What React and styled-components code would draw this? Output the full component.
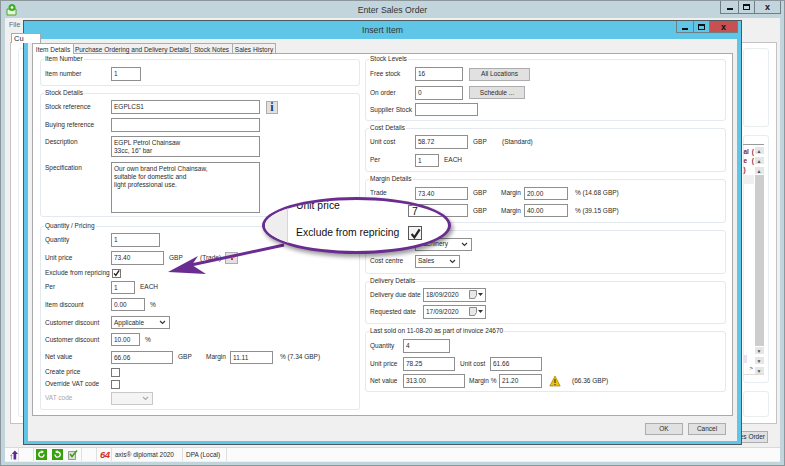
import React from 'react'
import styled, { createGlobalStyle } from 'styled-components'

const GlobalStyle = createGlobalStyle`
  html, body {
    margin: 0;
    padding: 0;
    background: #c3d5dc;
  }
  * {
    box-sizing: border-box;
  }
`

const Screen = styled.div`
  position: relative;
  width: 785px;
  height: 466px;
  overflow: hidden;
  display: flex;
  flex-direction: column;
  background: #c3d5dc;
  border: 1px solid #8b979d;
  font-family: "Liberation Sans", Arial, sans-serif;
  font-size: 6.5px;
  line-height: 10px;
  color: #2b2b2b;
`

const TitleBar = styled.div`
  height: 17px;
  flex: none;
  display: grid;
  grid-template-columns: 1fr auto 1fr;
  align-items: start;
`

const AppIcon = styled.svg`
  margin: 2px 0 0 5px;
`

const TitleText = styled.div`
  font-size: 8.7px;
  line-height: 18px;
  color: #333;
`

const CaptionButtons = styled.div`
  justify-self: end;
  display: flex;
  height: ${({ $h }) => $h}px;
  margin-right: ${({ $mr }) => $mr}px;
  border: 1px solid #6f7f88;
  border-top: 0;
`

const CaptionButton = styled.div`
  width: ${({ $w }) => $w}px;
  display: flex;
  align-items: center;
  justify-content: center;
  font-size: 9px;
  font-weight: bold;
  color: #111;
  background: ${({ $close }) => ($close ? '#c75050' : 'transparent')};
  & + & {
    border-left: 1px solid #6f7f88;
  }
`

const MinGlyph = styled.i`
  display: block;
  width: 6px;
  height: 2px;
  margin-top: 4px;
  background: #111;
`

const MaxGlyph = styled.i`
  display: block;
  width: 7px;
  height: 6px;
  border: 1px solid #111;
  border-top-width: 2px;
`

const BackClient = styled.div`
  height: 444px;
  flex: none;
  margin: 0 4px;
  display: flex;
  flex-direction: column;
  background: #f0f0f0;
`

const MenuBar = styled.div`
  height: 15px;
  flex: none;
  padding: 2px 0 0 4px;
  font-size: 7px;
  color: #666;
`

const BackTab = styled.div`
  width: 30px;
  height: 10px;
  flex: none;
  margin: 0 0 -1px 6px;
  padding-left: 2px;
  font-size: 7.5px;
  line-height: 9px;
  background: #fff;
  border: 1px solid #a9a9a9;
  border-bottom: 0;
  position: relative;
  z-index: 1;
`

const BackPanel = styled.div`
  height: 382px;
  flex: none;
  margin: 0 3px 0 5px;
  padding: 5px 7px 6px 7px;
  display: flex;
  justify-content: space-between;
  background: #fff;
  border: 1px solid #c4c4c4;
`

const BackColumn = styled.div`
  width: ${({ $w }) => $w}px;
  display: flex;
  flex-direction: column;
  gap: 8px;
`

const BackGroup = styled.div`
  height: ${({ $h }) => $h}px;
  flex: ${({ $h }) => ($h ? 'none' : 1)};
  border: 1px solid #e8edf0;
  border-radius: 3px;
  display: flex;
  justify-content: flex-end;
`

const BackGrid = styled.div`
  width: 22px;
  height: 231px;
  margin: 8px 4px 0 0;
  display: flex;
  border-top: 1px solid #9a9a9a;
  border-bottom: 1px solid #dcdcdc;
`

const GridCells = styled.div`
  flex: 1;
  display: flex;
  flex-direction: column;
`

const GridHeader = styled.div`
  height: 30px;
  flex: none;
  padding: 2px 0 0 0;
  display: flex;
  gap: 3px;
  font-weight: bold;
  line-height: 9px;
  color: #7a1f3a;
`

const GridRow = styled.div`
  height: 9px;
  flex: none;
  background: #efefef;
`

const GridFill = styled.div`
  flex: 1;
`

const GridTotal = styled.div`
  height: 8px;
  flex: none;
  width: 4px;
  background: #ecdff2;
`

const GridPager = styled.div`
  height: 11px;
  flex: none;
  padding-left: 6px;
  font-size: 6px;
`

const ScrollBar = styled.div`
  width: 10px;
  flex: none;
  padding-top: 2px;
  display: flex;
  flex-direction: column;
  align-items: center;
  gap: 3px;
`

const ScrollButton = styled.div`
  width: 9px;
  height: 7px;
  flex: none;
  background: #e6e6e6;
  display: flex;
  justify-content: center;
  align-items: center;
  font-size: 5px;
  color: #555;
`

const ScrollTrack = styled.div`
  width: 9px;
  flex: 1;
  margin: -2px 0;
  background: #cdcdcd;
`

const BackFooter = styled.div`
  height: 23px;
  flex: none;
  padding: 7px 12px 0 0;
  display: flex;
  justify-content: flex-end;
`

const StatusBar = styled.div`
  height: 14px;
  flex: none;
  display: flex;
  background: #fbfbfb;
  border-top: 1px solid #d9d9d9;
`

const StatusCell = styled.div`
  width: ${({ $w }) => $w}px;
  flex: ${({ $w }) => ($w ? 'none' : 1)};
  display: flex;
  align-items: center;
  gap: 5px;
  padding-left: ${({ $pl }) => $pl || 0}px;
  border-right: ${({ $w }) => ($w ? '1px solid #e0e0e0' : '0')};
  white-space: nowrap;
`

const RedMark = styled.span`
  font-size: 9.5px;
  font-weight: bold;
  font-style: italic;
  letter-spacing: -0.5px;
  color: #d62f2f;
`

const Dialog = styled.div`
  position: absolute;
  left: 22px;
  top: 19px;
  width: 719px;
  height: 425px;
  display: flex;
  flex-direction: column;
  background: #5fc6e8;
  border: 1px solid #4d5a60;
`

const DialogTitle = styled(TitleBar)`
  height: 18px;
`

const DialogBody = styled.div`
  flex: 1;
  min-height: 0;
  margin: 0 4px 3px 4px;
  padding: 4px 4px 0 4px;
  display: flex;
  flex-direction: column;
  background: #f0f0f0;
`

const Tabs = styled.div`
  display: flex;
  height: 11px;
  flex: none;
  position: relative;
  z-index: 1;
  margin-bottom: -1px;
`

const Tab = styled.div`
  width: ${({ $w }) => $w}px;
  flex: none;
  text-align: center;
  line-height: 11px;
  white-space: nowrap;
  background: ${({ $active }) => ($active ? '#fff' : '#f0f0f0')};
  border: 1px solid #acacac;
  border-bottom: ${({ $active }) => ($active ? '0' : '1px solid #acacac')};
  margin-right: -1px;
`

const TabPanel = styled.div`
  height: 363px;
  flex: none;
  padding: 0 6px 0 7px;
  display: flex;
  gap: 5px;
  background: #fff;
  border: 1px solid #a9a9a9;
`

const Column = styled.div`
  width: ${({ $w }) => $w}px;
  flex: none;
  display: flex;
  flex-direction: column;
  gap: 2px;
`

const Group = styled.fieldset`
  height: ${({ $h }) => $h}px;
  flex: none;
  margin: ${({ $mt }) => $mt || 0}px 0 0 0;
  padding: 0 0 0 4px;
  min-width: 0;
  border: 1px solid #e3e9ee;
  border-radius: 3px;
`

const Legend = styled.legend`
  margin-left: -1px;
  padding: 0 1px;
  line-height: 10px;
`

const Row = styled.div`
  height: ${({ $h }) => $h}px;
  display: flex;
  align-items: ${({ $top }) => ($top ? 'flex-start' : 'center')};
  padding-top: ${({ $top }) => ($top ? 2 : 0)}px;
`

const Label = styled.div`
  width: ${({ $w }) => $w || 66}px;
  flex: none;
  white-space: nowrap;
  padding-top: ${({ $top }) => ($top ? 1 : 0)}px;
  color: ${({ $off }) => ($off ? '#a8a8a8' : 'inherit')};
`

const Field = styled.div`
  width: ${({ $w }) => $w}px;
  height: ${({ $h }) => $h || 14}px;
  flex: none;
  margin-left: ${({ $ml }) => $ml || 0}px;
  padding: 0 2px;
  line-height: ${({ $h }) => ($h || 14) - 2}px;
  background: #fff;
  border: 1px solid #8f8f8f;
`

const Memo = styled(Field)`
  padding: 2px;
  line-height: 8px;
  white-space: pre-line;
`

const Select = styled(Field)`
  height: ${({ $h }) => $h || 13}px;
  display: flex;
  align-items: center;
  justify-content: space-between;
  padding: 0 3px 0 2px;
  background: ${({ $off }) => ($off ? '#f4f4f4' : '#fff')};
  border-color: ${({ $off }) => ($off ? '#c8c8c8' : '#8f8f8f')};
`

const DateField = styled(Select)`
  height: 14px;
  padding-right: 2px;
`

const DateIcons = styled.span`
  display: flex;
  align-items: center;
  gap: 1px;
`

const Unit = styled.div`
  width: ${({ $w }) => $w}px;
  flex: none;
  margin-left: ${({ $ml }) => $ml || 0}px;
  white-space: nowrap;
`

const Check = styled.div`
  width: 9px;
  height: 9px;
  flex: none;
  margin-left: ${({ $ml }) => $ml || 0}px;
  display: flex;
  align-items: center;
  justify-content: center;
  background: #fff;
  border: 1px solid #777;
`

const GreyButton = styled.div`
  width: ${({ $w }) => $w}px;
  height: ${({ $h }) => $h || 13}px;
  flex: none;
  margin-left: ${({ $ml }) => $ml || 0}px;
  display: flex;
  align-items: center;
  justify-content: center;
  background: #e1e1e1;
  border: 1px solid #adadad;
  white-space: nowrap;
`

const BackOrderButton = styled(GreyButton)`
  justify-content: flex-end;
  padding-right: 2px;
`

const InfoGlyph = styled.span`
  font-family: "Liberation Serif", serif;
  font-size: 12px;
  font-weight: bold;
  color: #123a78;
`

const DialogFooter = styled.div`
  flex: 1;
  display: flex;
  justify-content: flex-end;
  gap: 5px;
  padding: 7px 7px 0 0;
`

const ArrowLayer = styled.svg`
  position: absolute;
  left: 0;
  top: 0;
  pointer-events: none;
`

const Lens = styled.div`
  position: absolute;
  left: 261px;
  top: 196px;
  width: 189px;
  height: 57px;
  display: flex;
  overflow: hidden;
  background: #fff;
  border: 3px solid #6a2c91;
  border-radius: 50%;
  box-shadow: 2px 3px 4px rgba(0, 0, 0, 0.4);
  font-size: 10.4px;
  line-height: 12px;
  color: #111;
`

const LensStrip = styled.div`
  width: 23px;
  flex: none;
  background: #eeeeee;
  border-right: 1px solid #d6d6d6;
`

const LensBody = styled.div`
  flex: 1;
  padding-left: 8px;
  display: flex;
  flex-direction: column;
  gap: 14px;
`

const LensRow = styled.div`
  display: flex;
  height: ${({ $h }) => $h}px;
  align-items: ${({ $start }) => ($start ? 'flex-start' : 'center')};
`

const LensLabel = styled.div`
  width: 112px;
  flex: none;
  white-space: nowrap;
`

const LensField = styled.div`
  width: 60px;
  height: 12px;
  flex: none;
  margin-top: 5px;
  padding-left: 3px;
  border: 1px solid #777;
`

const LensCheck = styled.div`
  width: 14px;
  height: 14px;
  flex: none;
  display: flex;
  align-items: center;
  justify-content: center;
  border: 1px solid #555;
  background: #f4f4f4;
`

const Chevron = ({ color = '#333' }) => (
  <svg width="7" height="5" viewBox="0 0 7 5">
    <path d="M1 1l2.5 2.5L6 1" fill="none" stroke={color} strokeWidth="1.1" />
  </svg>
)

const Tick = ({ size = 8 }) => (
  <svg width={size} height={size} viewBox="0 0 10 10">
    <path d="M1.5 5.5l2.5 3L8.8 1.2" fill="none" stroke="#222" strokeWidth="2" />
  </svg>
)

const DatePick = () => (
  <DateIcons>
    <svg width="8" height="9" viewBox="0 0 8 9">
      <path d="M.5.5h7v5l-2 3h-5z" fill="#e8e8e8" stroke="#8a8a8a" />
    </svg>
    <svg width="5" height="3" viewBox="0 0 5 3">
      <path d="M0 0h5L2.5 3z" fill="#333" />
    </svg>
  </DateIcons>
)

const ItemForm = () => (
  <Column $w={320}>
    <Group $h={32}>
      <Legend>Item Number</Legend>
      <Row $h={20}>
        <Label>Item number</Label>
        <Field $w={30}>1</Field>
      </Row>
    </Group>
    <Group $h={129}>
      <Legend>Stock Details</Legend>
      <Row $h={18}>
        <Label>Stock reference</Label>
        <Field $w={149}>EGPLCS1</Field>
        <GreyButton $w={12} $h={13} $ml={6}><InfoGlyph>i</InfoGlyph></GreyButton>
      </Row>
      <Row $h={18}>
        <Label>Buying reference</Label>
        <Field $w={149} />
      </Row>
      <Row $h={26} $top>
        <Label $top>Description</Label>
        <Memo $w={149} $h={21}>{'EGPL Petrol Chainsaw\n33cc, 16" bar'}</Memo>
      </Row>
      <Row $h={55} $top>
        <Label $top>Specification</Label>
        <Memo $w={149} $h={51}>
          {'Our own brand Petrol Chainsaw,\nsuitable for domestic and\nlight professional use.'}
        </Memo>
      </Row>
    </Group>
    <Group $h={189} $mt={2}>
      <Legend>Quantity / Pricing</Legend>
      <Row $h={18}>
        <Label>Quantity</Label>
        <Field $w={49}>1</Field>
      </Row>
      <Row $h={18}>
        <Label>Unit price</Label>
        <Field $w={53}>73.40</Field>
        <Unit $w={14} $ml={5}>GBP</Unit>
        <Unit $w={20} $ml={17}>(Trade)</Unit>
        <GreyButton $w={13} $h={12} $ml={5}>
          <svg width="9" height="7" viewBox="0 0 9 7">
            <path d="M1 1h2v2H1z" fill="#d98a2b" />
            <path d="M4 3h2v2H4z" fill="#c33" />
            <path d="M6 1h2v2H6z" fill="#bbb" />
          </svg>
        </GreyButton>
      </Row>
      <Row $h={12}>
        <Label>Exclude from repricing</Label>
        <Check $ml={1}><Tick /></Check>
      </Row>
      <Row $h={16}>
        <Label>Per</Label>
        <Field $w={24} $h={13}>1</Field>
        <Unit $w={20} $ml={5}>EACH</Unit>
      </Row>
      <Row $h={19}>
        <Label>Item discount</Label>
        <Field $w={34} $h={13}>0.00</Field>
        <Unit $w={8} $ml={5}>%</Unit>
      </Row>
      <Row $h={17}>
        <Label>Customer discount</Label>
        <Select $w={59}>Applicable<Chevron /></Select>
      </Row>
      <Row $h={17}>
        <Label>Customer discount</Label>
        <Field $w={29} $h={13}>10.00</Field>
        <Unit $w={8} $ml={5}>%</Unit>
      </Row>
      <Row $h={18}>
        <Label>Net value</Label>
        <Field $w={62} $h={13}>66.06</Field>
        <Unit $w={14} $ml={5}>GBP</Unit>
        <Unit $w={19} $ml={14}>Margin</Unit>
        <Field $w={43} $h={13} $ml={5}>11.11</Field>
        <Unit $w={40} $ml={7}>% (7.34 GBP)</Unit>
      </Row>
      <Row $h={12}>
        <Label>Create price</Label>
        <Check><span /></Check>
      </Row>
      <Row $h={12}>
        <Label>Override VAT code</Label>
        <Check><span /></Check>
      </Row>
      <Row $h={16}>
        <Label $off>VAT code</Label>
        <Select $w={42} $off><span /><Chevron color="#aaa" /></Select>
      </Row>
    </Group>
  </Column>
)

const StockForm = () => (
  <Column $w={361}>
    <Group $h={67}>
      <Legend>Stock Levels</Legend>
      <Row $h={20}>
        <Label $w={45}>Free stock</Label>
        <Field $w={48}>16</Field>
        <GreyButton $w={61} $ml={6}>All Locations</GreyButton>
      </Row>
      <Row $h={17}>
        <Label $w={45}>On order</Label>
        <Field $w={48}>0</Field>
        <GreyButton $w={56} $ml={6}>Schedule ...</GreyButton>
      </Row>
      <Row $h={17}>
        <Label $w={45}>Supplier Stock</Label>
        <Field $w={63} $h={13} />
      </Row>
    </Group>
    <Group $h={49}>
      <Legend>Cost Details</Legend>
      <Row $h={18}>
        <Label $w={45}>Unit cost</Label>
        <Field $w={53}>58.72</Field>
        <Unit $w={14} $ml={5}>GBP</Unit>
        <Unit $w={30} $ml={15}>(Standard)</Unit>
      </Row>
      <Row $h={18}>
        <Label $w={45}>Per</Label>
        <Field $w={24} $h={13}>1</Field>
        <Unit $w={20} $ml={5}>EACH</Unit>
      </Row>
    </Group>
    <Group $h={49}>
      <Legend>Margin Details</Legend>
      <Row $h={18}>
        <Label $w={45}>Trade</Label>
        <Field $w={53} $h={13}>73.40</Field>
        <Unit $w={14} $ml={5}>GBP</Unit>
        <Unit $w={19} $ml={14}>Margin</Unit>
        <Field $w={44} $h={13} $ml={4}>20.00</Field>
        <Unit $w={44} $ml={7}>% (14.68 GBP)</Unit>
      </Row>
      <Row $h={17}>
        <Label $w={45} />
        <Field $w={53} $h={13} />
        <Unit $w={14} $ml={5}>GBP</Unit>
        <Unit $w={19} $ml={14}>Margin</Unit>
        <Field $w={44} $h={13} $ml={4}>40.00</Field>
        <Unit $w={44} $ml={7}>% (39.15 GBP)</Unit>
      </Row>
    </Group>
    <Group $h={49}>
      <Legend>&nbsp;</Legend>
      <Row $h={18}>
        <Label $w={45} />
        <Select $w={57}>Machinery<Chevron /></Select>
      </Row>
      <Row $h={16}>
        <Label $w={45}>Cost centre</Label>
        <Select $w={45}>Sales<Chevron /></Select>
      </Row>
    </Group>
    <Group $h={48}>
      <Legend>Delivery Details</Legend>
      <Row $h={17}>
        <Label $w={53}>Delivery due date</Label>
        <DateField $w={63}>18/09/2020<DatePick /></DateField>
      </Row>
      <Row $h={17}>
        <Label $w={53}>Requested date</Label>
        <DateField $w={63}>17/09/2020<DatePick /></DateField>
      </Row>
    </Group>
    <Group $h={66}>
      <Legend>Last sold on 11-08-20 as part of invoice 24670</Legend>
      <Row $h={19}>
        <Label $w={33}>Quantity</Label>
        <Field $w={47}>4</Field>
      </Row>
      <Row $h={17}>
        <Label $w={33}>Unit price</Label>
        <Field $w={52}>78.25</Field>
        <Unit $w={25} $ml={5}>Unit cost</Unit>
        <Field $w={52} $ml={5}>61.66</Field>
      </Row>
      <Row $h={18}>
        <Label $w={33}>Net value</Label>
        <Field $w={62}>313.00</Field>
        <Unit $w={25} $ml={4}>Margin %</Unit>
        <Field $w={43} $ml={5}>21.20</Field>
        <svg width="12" height="12" viewBox="0 0 12 12" style={{ marginLeft: 7, flex: 'none' }}>
          <path d="M6 1l5.2 10H.8z" fill="#f2c200" stroke="#8a6d00" strokeWidth=".6" />
          <path d="M5.5 4h1v4h-1zM5.5 9h1v1h-1z" fill="#222" />
        </svg>
        <Unit $w={40} $ml={11}>(66.36 GBP)</Unit>
      </Row>
    </Group>
  </Column>
)

export default function App () {
  return (
    <Screen>
      <GlobalStyle />
      <TitleBar>
        <AppIcon width="12" height="13" viewBox="0 0 12 13">
          <path d="M1 6h9v6H1z" fill="#e8f5d8" stroke="#4aa52a" />
          <circle cx="6" cy="4.5" r="3.5" fill="#3fae2a" />
          <circle cx="6" cy="4.5" r="1.3" fill="#fff" />
        </AppIcon>
        <TitleText>Enter Sales Order</TitleText>
        <CaptionButtons $h={13} $mr={3}>
          <CaptionButton $w={17}><MinGlyph /></CaptionButton>
          <CaptionButton $w={16}><MaxGlyph /></CaptionButton>
          <CaptionButton $w={26}>x</CaptionButton>
        </CaptionButtons>
      </TitleBar>
      <BackClient>
        <MenuBar>File</MenuBar>
        <BackTab>Cu</BackTab>
        <BackPanel>
          <BackColumn $w={10}>
            <BackGroup />
          </BackColumn>
          <BackColumn $w={26}>
            <BackGroup $h={79} />
            <BackGroup $h={248}>
              <BackGrid>
                <GridCells>
                  <GridHeader>
                    <span>al<br />e<br />)</span>
                    <span>(<br />(</span>
                  </GridHeader>
                  <GridRow />
                  <GridFill />
                  <GridTotal />
                  <GridPager>&gt;</GridPager>
                </GridCells>
                <ScrollBar>
                  <ScrollButton>▲</ScrollButton>
                  <ScrollButton>▲</ScrollButton>
                  <ScrollButton>▲</ScrollButton>
                  <ScrollTrack />
                  <ScrollButton>▼</ScrollButton>
                  <ScrollButton>▼</ScrollButton>
                  <ScrollButton>▼</ScrollButton>
                </ScrollBar>
              </BackGrid>
            </BackGroup>
            <BackGroup />
          </BackColumn>
        </BackPanel>
        <BackFooter>
          <BackOrderButton $w={60} $h={12}>Sales Order</BackOrderButton>
        </BackFooter>
        <StatusBar>
          <StatusCell $w={14} $pl={5}>
            <svg width="9" height="10" viewBox="0 0 9 10">
              <path d="M5.5 0L9 4H7v6H4V4H2z" fill="#5b2a91" />
              <path d="M1.5 4L3 6H2v4H1V6H0z" fill="#a58cc8" />
            </svg>
          </StatusCell>
          <StatusCell $w={15} />
          <StatusCell $w={48} $pl={2}>
            <svg width="11" height="11" viewBox="0 0 11 11">
              <path d="M0 0h11v11H0z" fill="#3aa010" />
              <path d="M8 5.5A2.6 2.6 0 1 1 6 3" fill="none" stroke="#fff" strokeWidth="1.4" />
              <path d="M5.5 1l2.5 2-2.5 1.6z" fill="#fff" />
            </svg>
            <svg width="11" height="11" viewBox="0 0 11 11">
              <path d="M0 0h11v11H0z" fill="#3aa010" />
              <path d="M3 5.5A2.6 2.6 0 1 0 5 3" fill="none" stroke="#fff" strokeWidth="1.4" />
              <path d="M5.5 1L3 3l2.5 1.6z" fill="#fff" />
            </svg>
            <svg width="10" height="10" viewBox="0 0 10 10">
              <path d="M.5 1.5h7v8h-7z" fill="#ddd" stroke="#999" />
              <path d="M2 4l2 2.5L9 .5" fill="none" stroke="#3aa010" strokeWidth="1.5" />
            </svg>
          </StatusCell>
          <StatusCell $w={15} />
          <StatusCell $w={15} $pl={3}><RedMark>64</RedMark></StatusCell>
          <StatusCell $w={71} $pl={3}>axis® diplomat 2020</StatusCell>
          <StatusCell $w={44} $pl={3}>DPA (Local)</StatusCell>
          <StatusCell />
        </StatusBar>
      </BackClient>
      <Dialog>
        <DialogTitle>
          <span />
          <TitleText>Insert Item</TitleText>
          <CaptionButtons $h={12} $mr={3}>
            <CaptionButton $w={16}><MinGlyph /></CaptionButton>
            <CaptionButton $w={16}><MaxGlyph /></CaptionButton>
            <CaptionButton $w={28} $close>x</CaptionButton>
          </CaptionButtons>
        </DialogTitle>
        <DialogBody>
          <Tabs>
            <Tab $w={42} $active>Item Details</Tab>
            <Tab $w={118}>Purchase Ordering and Delivery Details</Tab>
            <Tab $w={43}>Stock Notes</Tab>
            <Tab $w={44}>Sales History</Tab>
          </Tabs>
          <TabPanel>
            <ItemForm />
            <StockForm />
          </TabPanel>
          <DialogFooter>
            <GreyButton $w={38} $h={12}>OK</GreyButton>
            <GreyButton $w={38} $h={12}>Cancel</GreyButton>
          </DialogFooter>
        </DialogBody>
      </Dialog>
      <ArrowLayer width="785" height="466" viewBox="0 0 785 466">
        <path d="M283 244L190 264" stroke="#6a2c91" strokeWidth="3" fill="none" />
        <path d="M167 271L197 255L191 264L205 273z" fill="#6a2c91" />
      </ArrowLayer>
      <Lens>
        <LensStrip />
        <LensBody>
          <LensRow $h={12} $start>
            <LensLabel>Unit price</LensLabel>
            <LensField>7</LensField>
          </LensRow>
          <LensRow $h={14}>
            <LensLabel>Exclude from repricing</LensLabel>
            <LensCheck><Tick size={11} /></LensCheck>
          </LensRow>
        </LensBody>
      </Lens>
    </Screen>
  )
}
